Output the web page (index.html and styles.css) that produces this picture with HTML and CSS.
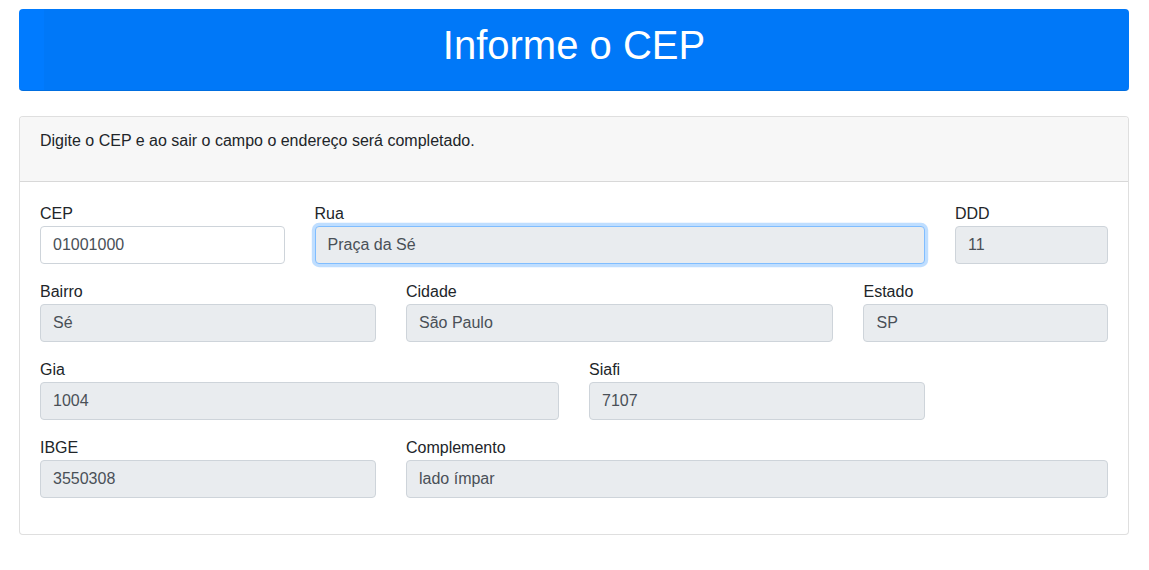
FILE: index.html
```html
<!DOCTYPE html>
<html lang="pt-BR">
<head>
<meta charset="utf-8">
<title>Informe o CEP</title>
<link rel="stylesheet" href="styles.css">
</head>
<body>
<div class="container">
  <header class="banner">
    <h1 class="banner-title">Informe o CEP</h1>
  </header>
  <section class="card">
    <div class="card-header">
      <p class="card-text">Digite o CEP e ao sair o campo o endereço será completado.</p>
    </div>
    <form class="card-body">
      <div class="row">
        <div class="field col-3"><label class="label">CEP</label><input class="input input-editable" value="01001000"></div>
        <div class="field col-7"><label class="label">Rua</label><input class="input input-focus" value="Praça da Sé" readonly></div>
        <div class="field col-2"><label class="label">DDD</label><input class="input" value="11" readonly></div>
      </div>
      <div class="row">
        <div class="field col-4"><label class="label">Bairro</label><input class="input" value="Sé" readonly></div>
        <div class="field col-5"><label class="label">Cidade</label><input class="input" value="São Paulo" readonly></div>
        <div class="field col-3"><label class="label">Estado</label><input class="input" value="SP" readonly></div>
      </div>
      <div class="row">
        <div class="field col-6"><label class="label">Gia</label><input class="input" value="1004" readonly></div>
        <div class="field col-4"><label class="label">Siafi</label><input class="input" value="7107" readonly></div>
      </div>
      <div class="row">
        <div class="field col-4"><label class="label">IBGE</label><input class="input" value="3550308" readonly></div>
        <div class="field col-8"><label class="label">Complemento</label><input class="input" value="lado ímpar" readonly></div>
      </div>
    </form>
  </section>
</div>
</body>
</html>
```

FILE: styles.css
```css
* { box-sizing: border-box; }

html, body {
  margin: 0;
  padding: 0;
  background: #fff;
  font-family: "Liberation Sans", Arial, sans-serif;
  font-size: 16px;
  line-height: 1.5;
  color: #212529;
}

.container {
  width: 1110px;
  margin: 9px 0 0 19px;
}

.banner {
  height: 82px;
  padding-top: 12px;
  border-radius: 4px;
  background: linear-gradient(to right, #007bff 25px, #0078f8 25px);
  border-bottom: 1px solid #006ee0;
}

.banner-title {
  margin: 0;
  font-size: 40px;
  font-weight: 400;
  line-height: 48px;
  color: #fff;
  text-align: center;
}

.card {
  margin-top: 25px;
  border: 1px solid rgba(0, 0, 0, .125);
  border-radius: 4px;
  background: #fff;
}

.card-header {
  padding: 12px 20px;
  background: #f7f7f7;
  border-bottom: 1px solid rgba(0, 0, 0, .125);
  border-radius: 3px 3px 0 0;
}

.card-text {
  margin: 0 0 16px;
}

.card-body {
  padding: 20px;
  margin: 0;
}

.row {
  display: flex;
  margin: 0 -15px;
}

.field {
  padding: 0 15px;
  margin-bottom: 16px;
  display: flex;
  flex-direction: column;
}

.col-2 { width: 16.6667%; }
.col-3 { width: 25%; }
.col-4 { width: 33.3333%; }
.col-5 { width: 41.6667%; }
.col-6 { width: 50%; }
.col-7 { width: 58.3333%; }
.col-8 { width: 66.6667%; }

.label {
  display: block;
  line-height: 24px;
}

.input {
  display: block;
  width: 100%;
  height: 38px;
  padding: 6px 12px;
  font-family: inherit;
  font-size: 16px;
  line-height: 24px;
  color: #495057;
  background: #e9ecef;
  border: 1px solid #ced4da;
  border-radius: 4px;
  outline: none;
}

.input-editable {
  background: #fff;
}

.input-focus {
  border-color: #80bdff;
  box-shadow: 0 0 0 3.2px rgba(0, 123, 255, .25);
}
```
